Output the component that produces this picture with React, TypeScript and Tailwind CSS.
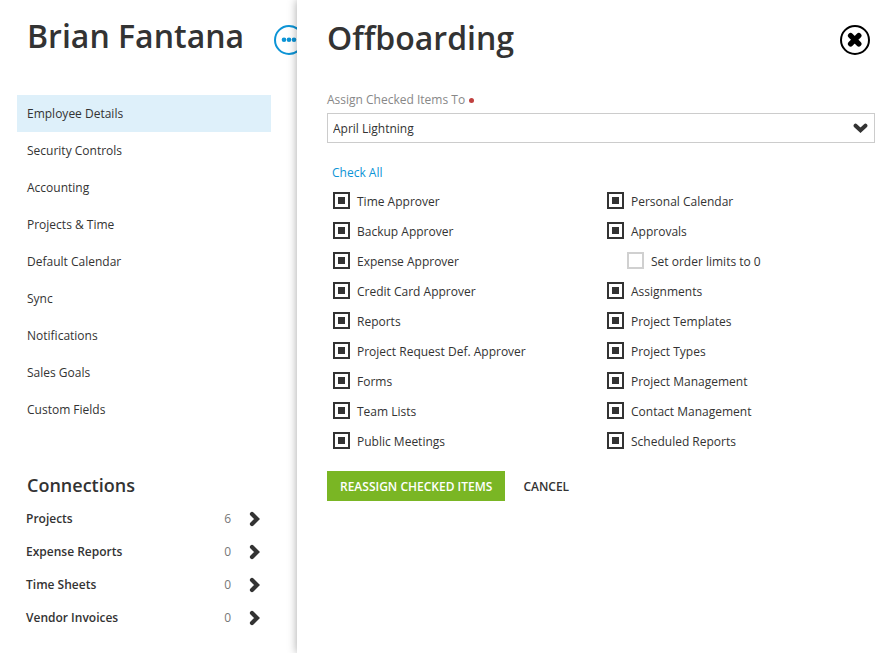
const navItems = [
  "Employee Details",
  "Security Controls",
  "Accounting",
  "Projects & Time",
  "Default Calendar",
  "Sync",
  "Notifications",
  "Sales Goals",
  "Custom Fields",
];

const connections = [
  { name: "Projects", count: 6 },
  { name: "Expense Reports", count: 0 },
  { name: "Time Sheets", count: 0 },
  { name: "Vendor Invoices", count: 0 },
];

type Item = { label: string; nested?: boolean };

const leftItems: Item[] = [
  { label: "Time Approver" },
  { label: "Backup Approver" },
  { label: "Expense Approver" },
  { label: "Credit Card Approver" },
  { label: "Reports" },
  { label: "Project Request Def. Approver" },
  { label: "Forms" },
  { label: "Team Lists" },
  { label: "Public Meetings" },
];

const rightItems: Item[] = [
  { label: "Personal Calendar" },
  { label: "Approvals" },
  { label: "Set order limits to 0", nested: true },
  { label: "Assignments" },
  { label: "Project Templates" },
  { label: "Project Types" },
  { label: "Project Management" },
  { label: "Contact Management" },
  { label: "Scheduled Reports" },
];

function CheckRow({ label, nested }: Item) {
  return (
    <label className={`flex h-[30px] items-center gap-[7px] text-[12px] ${nested ? "pl-5" : ""}`}>
      <input
        type="checkbox"
        defaultChecked={!nested}
        className="mb-px size-[17px] shrink-0 appearance-none border-2 border-[#d0d0d0] bg-white bg-clip-content p-[3px] checked:border-[#333] checked:bg-[#333]"
      />
      <span className="pt-[2px]">{label}</span>
    </label>
  );
}

function Sidebar() {
  return (
    <aside className="w-[297px] shrink-0 overflow-hidden">
      <header className="flex h-[95px] items-start pl-[27px] pt-[13px]">
        <h1 className="w-[247px] shrink-0 whitespace-nowrap text-[32px] font-semibold leading-[46px]">Brian Fantana</h1>
        <button type="button" aria-label="More actions" className="mt-3 shrink-0">
          <svg width="30" height="30" viewBox="0 0 30 30" fill="none">
            <circle cx="15" cy="15" r="14" stroke="#0c94d6" strokeWidth="2" />
            <g fill="#0c94d6">
              <circle cx="10" cy="14.7" r="2.3" />
              <circle cx="15" cy="14.7" r="2.3" />
              <circle cx="20" cy="14.7" r="2.3" />
            </g>
          </svg>
        </button>
      </header>
      <nav className="ml-[17px] mr-[26px] text-[12px]">
        {navItems.map((item, i) => (
          <a key={item} href="#" className={`flex h-[37px] items-center px-[10px] ${i === 0 ? "bg-[#def0fa]" : ""}`}>
            {item}
          </a>
        ))}
      </nav>
      <section className="ml-[26px] mr-9 pt-[42px]">
        <h2 className="pb-px pl-px text-[18px] font-semibold leading-[31px]">Connections</h2>
        {connections.map((c) => (
          <a key={c.name} href="#" className="flex h-[33px] items-center text-[12px]">
            <span className="flex-1 font-semibold">{c.name}</span>
            <span className="text-[#777]">{c.count}</span>
            <svg className="ml-[18px]" width="12" height="16" viewBox="0 0 12 16" fill="none">
              <path d="M3 3L8 8L3 13" stroke="#333" strokeWidth="4.2" strokeLinecap="round" />
            </svg>
          </a>
        ))}
      </section>
    </aside>
  );
}

export default function App() {
  return (
    <div className="flex min-h-screen bg-white font-['Open_Sans',sans-serif] text-[#333]">
      <Sidebar />
      <main className="relative min-w-0 flex-1 bg-white pl-[30px] pr-[5px] shadow-[0_0_9px_rgba(0,0,0,0.35)]">
        <header className="flex h-[90px] items-start justify-between pr-[5px] pt-[15px]">
          <h1 className="text-[32px] font-semibold leading-[46px]">Offboarding</h1>
          <button type="button" aria-label="Close" className="mt-[10px]">
            <svg width="30" height="30" viewBox="0 0 30 30" fill="none">
              <circle cx="15" cy="15" r="14" stroke="#000" strokeWidth="2" />
              <path d="M10.6 10.6L18.8 18.8M18.8 10.6L10.6 18.8" stroke="#000" strokeWidth="5.4" strokeLinecap="round" />
            </svg>
          </button>
        </header>
        <form onSubmit={(e) => e.preventDefault()}>
          <label htmlFor="assignee" className="flex h-[23px] items-center gap-1 pb-[3px] text-[12px] text-[#888]">
            Assign Checked Items To
            <span className="size-[5px] rounded-full bg-[#c0403f]" />
          </label>
          <div className="grid items-center">
            <select
              id="assignee"
              className="col-start-1 row-start-1 h-[30px] w-full appearance-none border border-[#ccc] bg-white px-[5px] pt-[2px] text-[12px] text-[#333]"
            >
              <option>April Lightning</option>
            </select>
            <svg
              className="pointer-events-none col-start-1 row-start-1 mr-[6px] justify-self-end"
              width="16"
              height="12"
              viewBox="0 0 16 12"
              fill="none"
            >
              <path d="M2.6 3.7L7.5 8.2L12.4 3.7" stroke="#333" strokeWidth="4" strokeLinecap="round" />
            </svg>
          </div>
          <button type="button" className="ml-[5px] mt-5 block h-[19px] text-[12px] leading-[19px] text-[#0c94d6]">
            Check All
          </button>
          <div className="mt-1 grid grid-cols-2 pl-[6px]">
            <div>
              {leftItems.map((item) => (
                <CheckRow key={item.label} {...item} />
              ))}
            </div>
            <div className="pl-[3px]">
              {rightItems.map((item) => (
                <CheckRow key={item.label} {...item} />
              ))}
            </div>
          </div>
          <div className="mt-[15px] flex text-[12px] font-semibold">
            <button type="submit" className="h-[30px] bg-[#7ab624] px-[13px] pt-[2px] text-white">
              REASSIGN CHECKED ITEMS
            </button>
            <button type="button" className="h-[30px] px-[18px] pt-[2px]">
              CANCEL
            </button>
          </div>
        </form>
      </main>
    </div>
  );
}
